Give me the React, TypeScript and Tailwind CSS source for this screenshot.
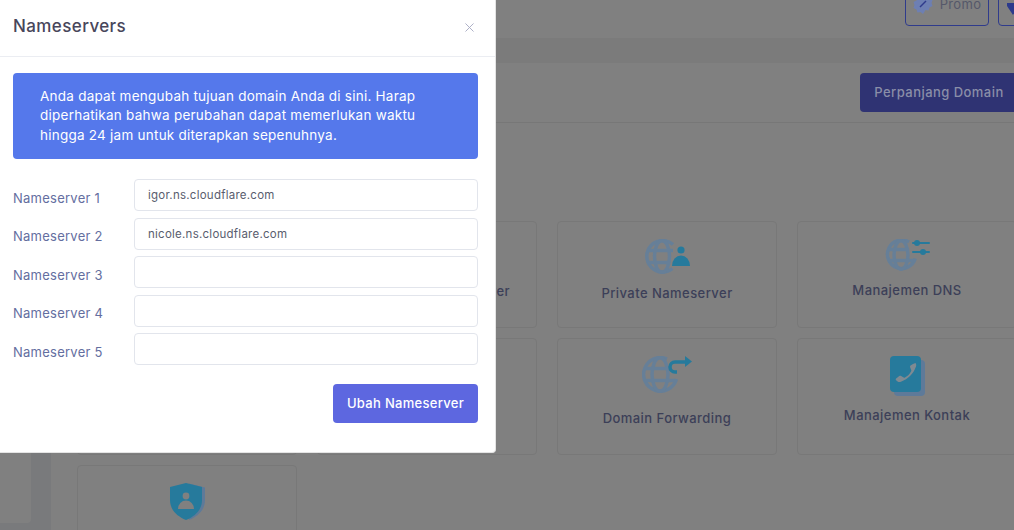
import React from 'react';
import { X } from 'lucide-react';

const GLOBE = '#667f98';
const ACCENT = '#267a9c';

// globe drawn open on the right, where the accent glyph sits
const Globe = ({ arc, lines, cx, cy, rx }: { arc: string; lines: string; cx: number; cy: number; rx: number }) => (
  <g fill="none" stroke={GLOBE} strokeWidth="3.500">
    <path d={arc} />
    <ellipse cx={cx} cy={cy} rx={rx} ry={cy - 1.750} />
    <path d={lines} />
  </g>
);

const PrivateIcon = () => (
  <svg width="45" height="35" viewBox="0 0 45 35">
    <Globe cx={17} cy={17.5} rx={7.5} arc="M28 5.500A15.750 15.750 0 1 0 27.500 29.500" lines="M3 11.500h25M3 23.500h21" />
    <circle cx="36" cy="11" r="3.600" fill={ACCENT} />
    <path d="M27 27a9 10.500 0 0 1 18 0z" fill={ACCENT} />
  </svg>
);

const DnsIcon = () => (
  <svg width="45" height="32" viewBox="0 0 45 32">
    <Globe cx={16} cy={16} rx={7} arc="M24 3A14.250 14.250 0 1 0 30.300 19.500" lines="M3 10.500h20M3 21.500h26" />
    <g fill={ACCENT}>
      <rect x="27" y="3" width="18" height="2" rx="1" />
      <circle cx="32" cy="4" r="3" />
      <rect x="27" y="12" width="18" height="2" rx="1" />
      <circle cx="38" cy="13" r="3" />
    </g>
  </svg>
);

const ForwardIcon = () => (
  <svg width="50" height="43" viewBox="0 0 50 43">
    <Globe cx={18} cy={18.500} rx={8} arc="M25 3A16.750 16.750 0 1 0 34.500 23" lines="M3 12.500h24M3 24.500h30" />
    <path d="M35 16h-2a5 5 0 0 1 0-10H45" fill="none" stroke={ACCENT} strokeWidth="3.500" />
    <path d="M43 0l7 5.500-7 5.500z" fill={ACCENT} />
  </svg>
);

const ContactIcon = () => (
  <svg width="35" height="40" viewBox="0 0 35 40">
    <rect x="4" y="4" width="31" height="36" rx="4" fill="#5e7a99" />
    <rect width="31" height="36" rx="4" fill={ACCENT} />
    <path
      d="M23 8l-2.500 1.500c-.5.5-.5 1-.3 2l1 2.500c.3.800 0 1.300-.5 2-1.500 2.500-3 4-5.700 5.500-.6.300-1.200.3-1.800-.2l-2-1.300c-.7-.4-1.300-.4-1.900.1l-3.200 2.400c-.6.600-.5 1.300 0 1.700l1.500 1.300c1 .7 2 .7 3.300.2 7.500-2.800 12.500-8 15-15 .6-1.600.4-2.800-.5-3.800z"
      fill="#7f8a92"
    />
  </svg>
);

const ShieldIcon = () => (
  <svg width="35" height="37" viewBox="0 0 35 37">
    <path d="M19 0.500L35 4.500V17c0 9-6 16-16 20z" fill="#5e7a99" />
    <path d="M16 0L32 4v13c0 9-6 16-16 20C6 33 0 26 0 17V4z" fill={ACCENT} />
    <circle cx="16" cy="13" r="3.400" fill="#808080" />
    <path d="M8 26a8 8.500 0 0 1 16 0z" fill="#808080" />
  </svg>
);

// cards fully behind the modal carry no label
const cards: { label?: string; icon?: React.ReactNode }[] = [
  {},
  { label: 'Pengelolaan Nameserver' },
  { label: 'Private Nameserver', icon: <PrivateIcon /> },
  { label: 'Manajemen DNS', icon: <DnsIcon /> },
  {},
  {},
  { label: 'Domain Forwarding', icon: <ForwardIcon /> },
  { label: 'Manajemen Kontak', icon: <ContactIcon /> },
  { icon: <ShieldIcon /> },
];

const nameservers = ['igor.ns.cloudflare.com', 'nicole.ns.cloudflare.com', '', '', ''];

export default function App() {
  return (
    <div className="relative flex w-[1014px] h-[530px] overflow-hidden bg-[#808080] font-['Inter','Liberation_Sans',sans-serif]">
      <aside className="w-[51px] shrink-0 bg-[#797a7c]">
        <div className="w-[31px] h-[523px] bg-[#808080] rounded-br" />
      </aside>

      <main className="w-[967px] shrink-0 flex flex-col">
        <div className="h-[38px] shrink-0 flex items-end justify-end gap-[9px] pb-[12px]">
          <div className="w-[84px] h-[40px] shrink-0 flex items-start justify-center gap-[7px] border border-[#2f3b8c] rounded text-[13px] tracking-[0.3px] text-[#55586a]">
            <svg width="20" height="20" viewBox="0 0 20 20" className="mt-[7px] shrink-0">
              <path d="M10 0l2.500 2 3-.5 1 3 3 1.500-1 3 1 3-3 1.500-1 3-3-.5L10 20l-2.500-2-3 .5-1-3-3-1.500 1-3-1-3 3-1.500 1-3 3 .5z" fill="#6d7fb3" />
              <path d="M13 7l-6 6" stroke="#2f3b8c" strokeWidth="1.500" />
            </svg>
            <span className="mt-[8px]">Promo</span>
          </div>
          <div className="w-[20px] h-[40px] shrink-0 border border-[#2f3b8c] rounded-l pl-[8px] pt-[16px]">
            <svg width="11" height="12" viewBox="0 0 11 12">
              <path d="M0 0h11v3L6 12 0 3z" fill="#2c3a8c" />
            </svg>
          </div>
        </div>
        <div className="h-[25px] shrink-0 bg-[#7b7b7b]" />
        <div className="h-[60px] shrink-0 flex items-start justify-end pt-[10px] border-b border-[#777777]">
          <div className="w-[158px] h-[39px] flex items-center justify-center rounded bg-[#2f3373] text-[13px] font-medium tracking-[0.45px] text-[#8a8ea8]">
            Perpanjang Domain
          </div>
        </div>
        <div className="mt-[98px] ml-[26px] grid grid-cols-[repeat(4,220px)] grid-rows-[107px_117px_107px] gap-x-[20px] gap-y-[10px]">
          {cards.map((card, i) => (
            <div key={i} className="flex flex-col items-center pt-[17px] border border-[#787878] rounded">
              {card.icon ?? <div className="h-[33px]" />}
              {card.label && (
                <span className="mt-[9px] text-[13px] leading-[20px] font-medium tracking-[0.45px] text-[#3c3f58] whitespace-nowrap">
                  {card.label}
                </span>
              )}
            </div>
          ))}
        </div>
      </main>

      {/* modal dialog */}
      <div className="absolute left-0 top-0 w-[496px] h-[453px] bg-white border-r border-b border-[#e4e4e4] rounded-br">
        <div className="h-[57px] flex items-start justify-between pl-[13px] pr-[18px] pt-[14px] border-b border-[#ebedf2]">
          <h2 className="text-[17px] leading-[24px] font-medium tracking-[0.4px] text-[#48465b]">Nameservers</h2>
          <X size={15} strokeWidth={1.5} className="mt-[6px] text-[#a7abc3]" />
        </div>

        <div className="mt-[16px] mx-[13px] w-[465px] h-[86px] flex items-center px-[27px] rounded bg-[#5578eb] text-[13.5px] leading-[19.5px] tracking-[0.24px] text-white whitespace-nowrap">
          <p>
            Anda dapat mengubah tujuan domain Anda di sini. Harap
            <br />
            diperhatikan bahwa perubahan dapat memerlukan waktu
            <br />
            hingga 24 jam untuk diterapkan sepenuhnya.
          </p>
        </div>

        <div className="mt-[20px] mx-[13px] flex flex-col gap-[6.5px]">
          {nameservers.map((value, i) => (
            <div key={i} className="flex">
              <label className="w-[121px] pt-[8.5px] text-[13px] leading-[20px] tracking-[0.25px] text-[#646e9f]">
                Nameserver {i + 1}
              </label>
              <input
                readOnly
                defaultValue={value}
                className="w-[344px] h-[32px] px-[13px] border border-[#e2e5ec] rounded bg-white text-[11.5px] tracking-[0.25px] text-[#595d6e] outline-none"
              />
            </div>
          ))}
        </div>

        <div className="mt-[19px] mr-[17px] flex justify-end">
          <button className="w-[145px] h-[39px] rounded bg-[#5d67e0] text-[13px] font-medium tracking-[0.3px] text-white">
            Ubah Nameserver
          </button>
        </div>
      </div>
    </div>
  );
}
